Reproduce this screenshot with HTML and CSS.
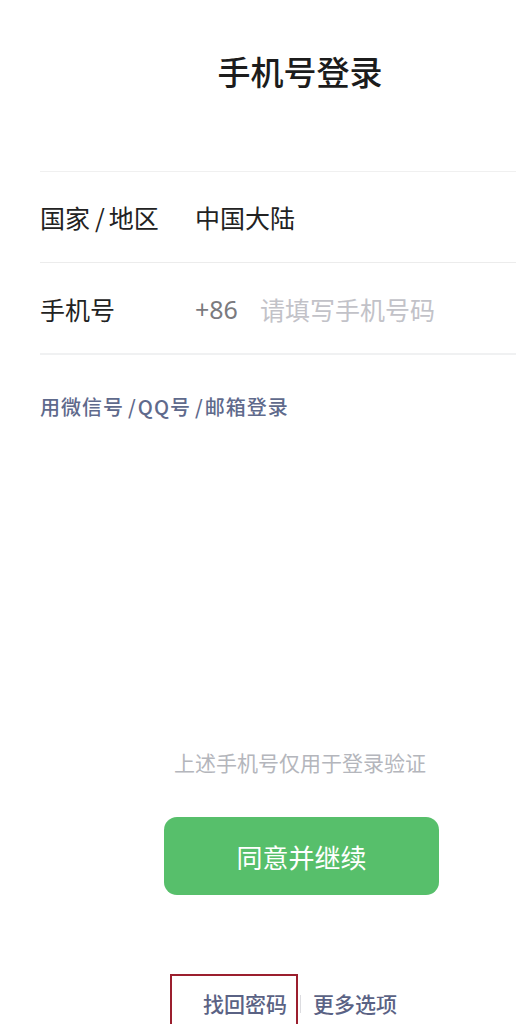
FILE: index.html
```html
<!DOCTYPE html>
<html lang="zh-CN">
<head>
<meta charset="utf-8">
<title>手机号登录</title>
<link rel="stylesheet" href="styles.css">
</head>
<body>
<div class="page">
  <h1 class="title">手机号登录</h1>
  <div class="form">
    <div class="row">
      <span class="label">国家<span class="slash">/</span>地区</span>
      <span class="value">中国大陆</span>
    </div>
    <div class="row">
      <span class="label">手机号</span>
      <span class="code">+86</span>
      <span class="placeholder">请填写手机号码</span>
    </div>
  </div>
  <a class="alt-link">用微信号<span class="slash-sm">/</span>QQ号<span class="slash-sm">/</span>邮箱登录</a>
  <p class="hint">上述手机号仅用于登录验证</p>
  <button class="submit">同意并继续</button>
  <div class="footer">
    <span class="highlight"><span class="foot-link">找回密码</span></span>
    <span class="sep"></span>
    <span class="foot-link">更多选项</span>
  </div>
</div>
</body>
</html>
```
FILE: styles.css
```css
html, body {
  margin: 0;
  padding: 0;
  background: #ffffff;
}
body {
  font-family: "Noto Sans CJK SC", "Noto Sans", sans-serif;
  width: 516px;
  height: 1024px;
  overflow: hidden;
}
.page {
  display: flex;
  flex-direction: column;
}
.title {
  margin: 55px 0 0;
  padding-left: 84px;
  text-align: center;
  font-size: 33px;
  line-height: 33px;
  font-weight: 500;
  color: #1c1c1c;
}
.form {
  margin: 83px 0 0 40px;
  border-top: 1px solid #f0f0f0;
}
.row {
  height: 90px;
  border-bottom: 1px solid #ececec;
  display: flex;
  align-items: center;
  font-size: 25px;
  line-height: 25px;
}
.row:last-child {
  border-bottom-width: 2px;
  border-bottom-color: #f0f1f2;
}
.label {
  width: 155px;
  color: #222222;
}
.slash {
  margin: 0 4px 0 5px;
}
.value {
  color: #222222;
}
.code {
  color: #7a7a7e;
  font-family: "Noto Sans", "Noto Sans CJK SC", sans-serif;
  margin-right: 22px;
  margin-top: 3px;
}
.placeholder {
  color: #c2c2c8;
  margin-top: 3px;
}
.row:nth-child(2) .label {
  margin-top: 3px;
}
.alt-link {
  margin: 42px 0 0 40px;
  font-size: 20px;
  line-height: 20px;
  letter-spacing: 1px;
  color: #5f6a8c;
  font-weight: 500;
}
.slash-sm {
  margin: 0 1px 0 4px;
}
.hint {
  margin: 335px 0 0;
  padding-left: 84px;
  text-align: center;
  font-size: 21px;
  line-height: 21px;
  color: #b4b6bc;
}
.submit {
  margin: 44px 0 0 164px;
  width: 275px;
  height: 78px;
  border: none;
  border-radius: 13px;
  background: #57bf6b;
  color: #ffffff;
  font-family: "Noto Sans CJK SC", sans-serif;
  font-size: 26px;
  padding: 0;
}
.footer {
  margin: 79px 0 0 170px;
  display: flex;
  align-items: flex-start;
}
.highlight {
  display: block;
  width: 128px;
  height: 70px;
  border: 2.5px solid #9b1f2e;
  border-bottom: none;
  padding: 17px 0 0 31px;
  box-sizing: border-box;
}
.foot-link {
  font-size: 21px;
  line-height: 21px;
  color: #5a6284;
  font-weight: 500;
}
.sep {
  width: 1px;
  height: 18px;
  background: #dcdce0;
  margin: 21px 12px 0 2px;
}
.footer > .foot-link {
  margin-top: 19px;
}
```
